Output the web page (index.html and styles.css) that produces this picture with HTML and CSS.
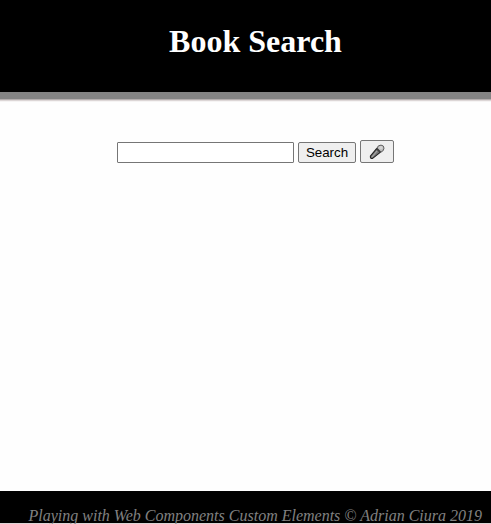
FILE: index.html
```html
<!DOCTYPE html>
<html lang="en">
<head>
<meta charset="utf-8">
<title>Book Search</title>
<link rel="stylesheet" href="styles.css">
</head>
<body>
<header class="header"><h1 class="title">Book Search</h1></header>
<main class="main">
<form class="search">
<input class="field" type="text" aria-label="Search books">
<button class="button" type="button">Search</button>
<button class="button mic" type="button" aria-label="Voice search">
<svg class="mic-icon" width="16" height="16" viewBox="0 0 16 16">
<path d="M7.6 4.6 1.4 12.2Q1 14.8 3.6 14.4L11.2 8.4z" fill="#777" stroke="#222" stroke-width="1.1" stroke-linejoin="round"/>
<path d="M8 7 3 13" stroke="#aaa" stroke-width="1.1"/>
<path d="M8 4Q9 1 12 1.1Q15 1.3 15 4.2Q15 7 11.8 8.2z" fill="#b8b8b8" stroke="#555" stroke-width=".9"/>
<path d="M7.6 4.2 11.8 8.4" stroke="#444" stroke-width="1.2"/>
<circle cx="12" cy="3.8" r="1.8" fill="#d4d4d4"/>
</svg>
</button>
</form>
</main>
<footer class="footer">Playing with Web Components Custom Elements © Adrian Ciura 2019</footer>
</body>
</html>
```
FILE: styles.css
```css
* { box-sizing: border-box; }
html { overflow: hidden; background: #fefefe; }
body {
  display: flex;
  flex-direction: column;
  width: 491px;
  height: 524px;
  margin: 0;
  font-family: "Liberation Serif", serif;
}
.header {
  height: 99px;
  flex: none;
  padding: 23px 0 0 20px;
  background: #000;
  border-bottom: 7px solid #848484;
  box-shadow: 0 1px #b5afaf, 0 2px #dcd6d6, 0 3px #f6f4f4;
  text-align: center;
}
.title { margin: 0; font-size: 32px; line-height: 37px; color: #fff; }
.main { flex: 1; padding: 41px 0 0 20px; }
.search { display: flex; justify-content: center; gap: 4px; align-items: flex-start; }
.field {
  width: 177px;
  height: 21px;
  margin: 2px 0 0;
  border: 1px solid #767676;
  border-radius: 1px;
  background: #fff;
}
.button {
  width: 58px;
  height: 21px;
  margin: 2px 0 0;
  padding: 0;
  border: 1px solid #767676;
  border-radius: 2px;
  background: #efefef;
  color: #000;
  font: 13.333px "Liberation Sans", sans-serif;
}
.mic { display: grid; place-items: center; width: 34px; height: 23px; margin-top: 0; }
.mic-icon { display: block; }
.footer {
  flex: none;
  height: 33px;
  padding: 16px 9px 0 0;
  background: #000;
  border-bottom: 1px solid #ddd5d5;
  color: #808080;
  font-size: 16px;
  font-style: italic;
  line-height: 18px;
  text-align: right;
  white-space: nowrap;
}
```
